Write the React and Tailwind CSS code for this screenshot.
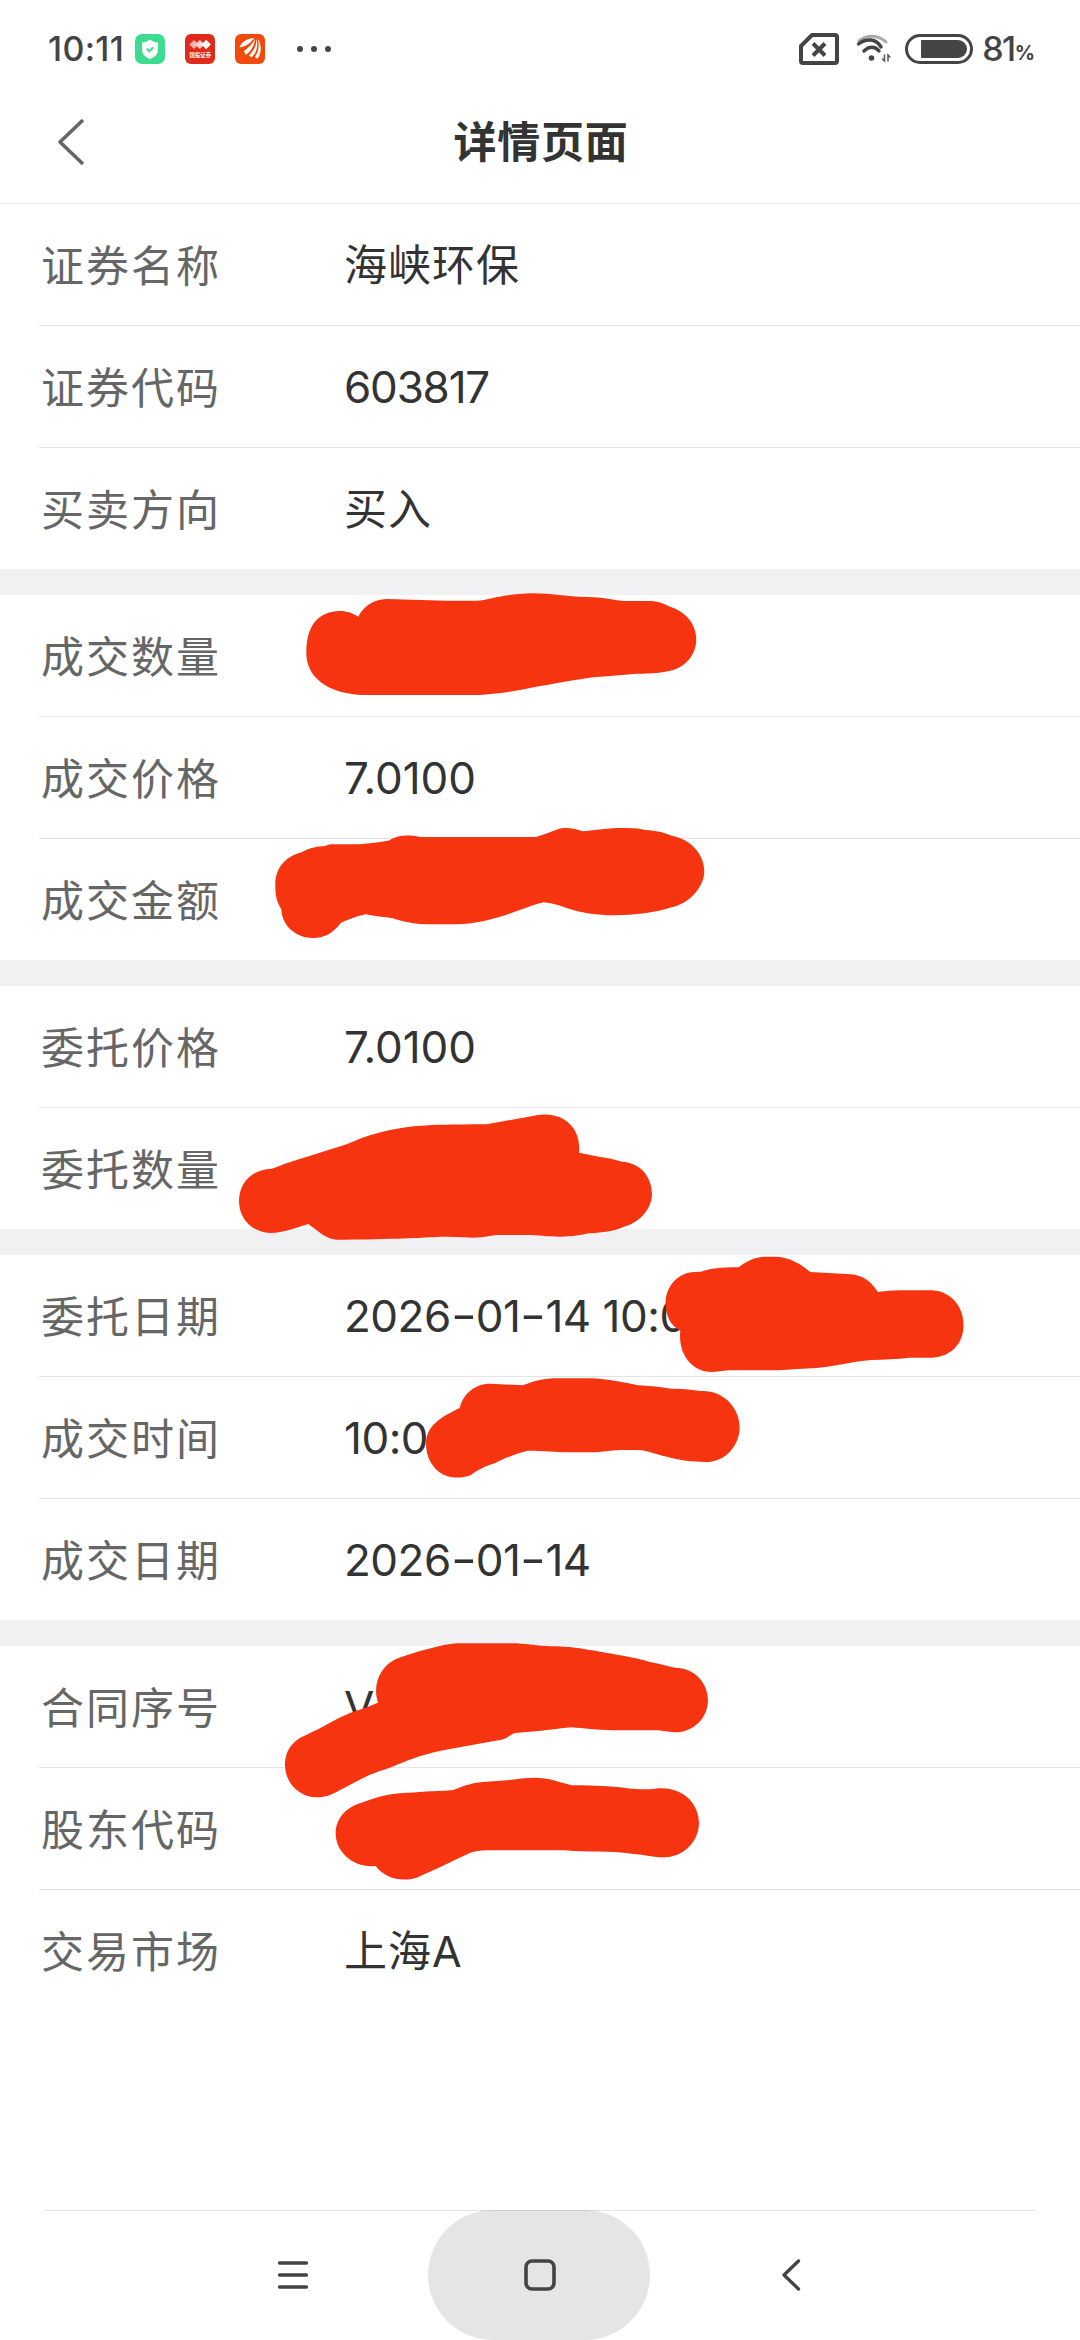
import React from 'react';

const groups = [
  [
    { label: '证券名称', value: '海峡环保' },
    { label: '证券代码', value: '603817', numeric: true, spacing: 'tracking-[-1.200px]' },
    { label: '买卖方向', value: '买入' },
  ],
  [
    { label: '成交数量', value: '' },
    { label: '成交价格', value: '7.0100', numeric: true, spacing: 'tracking-normal' },
    { label: '成交金额', value: '' },
  ],
  [
    { label: '委托价格', value: '7.0100', numeric: true, spacing: 'tracking-normal' },
    { label: '委托数量', value: '' },
  ],
  [
    { label: '委托日期', value: '2026-01-14 10:0', numeric: true },
    { label: '成交时间', value: '10:0', numeric: true },
    { label: '成交日期', value: '2026-01-14', numeric: true },
  ],
  [
    { label: '合同序号', value: 'V', numeric: true },
    { label: '股东代码', value: '' },
    { label: '交易市场', value: '上海A' },
  ],
];

// Marker strokes that hide the private values
const scribbles = [
  {
    transform: 'translate(260 570) scale(0.3333)',
    d: 'M295 140C310 110 340 88 380 87L560 92H650C690 90 720 72 820 70C870 70 920 80 980 81C1030 81 1060 90 1090 93H1160C1190 93 1205 98 1230 110C1280 125 1309 165 1309 208C1309 255 1275 295 1225 304C1200 309 1180 311 1120 312C1080 316 1040 318 1000 322C940 330 890 340 820 352C760 365 720 370 660 375H305C200 370 139 320 139 250C139 170 170 125 240 123C262 123 280 130 295 140Z',
  },
  {
    transform: 'translate(260 570) scale(0.3333)',
    d: 'M210 823H300C330 820 360 816 385 812C410 797 440 792 480 801H828C850 795 870 785 890 779C915 770 945 775 967 784C1000 782 1030 774 1090 774C1130 774 1140 776 1155 780C1190 782 1210 787 1235 797C1295 808 1333 855 1333 903C1333 950 1290 1000 1235 1012C1190 1028 1120 1036 1065 1036C1010 1036 960 1027 930 1017C895 1007 885 1000 850 997C800 1010 760 1030 720 1040C660 1058 620 1063 580 1063H500C450 1061 425 1054 398 1045C370 1041 345 1038 318 1033C290 1038 270 1048 243 1058C220 1088 195 1104 160 1104C105 1104 65 1065 64 1017C52 1000 46 980 46 950C44 895 75 860 125 847C150 832 175 829 195 828Z',
  },
  {
    transform: 'translate(220 1000) scale(0.3333)',
    d: 'M155 506C180 498 195 490 230 480L380 433C430 412 470 395 560 382C620 374 660 374 800 373L950 346C1030 332 1085 385 1077 458L1140 471C1170 475 1190 480 1205 485C1265 487 1296 535 1296 582C1296 625 1260 668 1210 681C1180 695 1150 697 1110 700C1080 705 1060 710 1020 710C980 710 955 705 920 705H830C800 710 780 713 760 713C720 712 700 710 660 710C600 713 560 716 370 719C330 722 310 705 300 698L265 672C225 683 195 699 150 699C95 697 57 655 57 603C57 550 95 508 155 506Z',
  },
  {
    transform: 'translate(320 1240) scale(0.4209 0.3333)',
    d: 'M905 95C930 85 950 82 995 82C1015 60 1040 50 1060 50H1085C1115 52 1140 70 1165 96L1260 103C1290 106 1310 125 1325 156C1345 154 1360 151 1380 151H1455C1500 155 1529 200 1529 255C1529 310 1500 350 1455 353H1400C1370 357 1340 359 1310 360C1260 365 1220 380 1180 384C1150 386 1120 388 1085 391H970C955 392 945 396 930 396C885 396 850 345 856 272C835 260 821 230 821 190C821 140 850 97 890 96Z',
  },
  {
    transform: 'translate(320 1240) scale(0.4209 0.3333)',
    d: 'M405 431L482 436C505 425 525 416 560 415H640C690 417 720 427 755 436C790 438 815 443 835 446C870 446 885 450 905 453C960 450 997 505 997 562C997 610 970 660 925 666C850 668 810 643 765 631C740 629 715 630 700 631C680 634 665 636 655 637H590C560 636 530 633 493 632C460 642 435 658 415 670C390 680 375 690 358 706C340 714 325 714 310 711C275 702 252 660 252 612C252 555 290 530 332 504C340 460 370 430 405 431Z',
  },
  {
    transform: 'translate(270 1620) scale(0.3333)',
    d: 'M380 116C440 95 510 75 560 70H740C780 73 810 78 840 79C900 79 930 85 1000 97C1060 107 1100 115 1140 126C1180 134 1200 140 1215 143C1275 143 1314 190 1314 240C1314 295 1270 337 1215 337C1190 336 1180 332 1165 331H1030C980 330 940 325 905 322C860 326 830 332 780 335L733 339C715 350 705 358 685 361L540 387C430 407 400 430 340 450C290 465 270 480 210 510C190 522 170 532 140 532C90 532 45 490 45 435C45 385 75 358 110 344C160 322 200 295 240 279C270 269 300 258 324 248C305 190 335 135 380 116Z',
  },
  {
    transform: 'translate(270 1620) scale(0.3333)',
    d: 'M270 550C310 535 350 521 400 519C430 519 450 515 480 514C510 512 530 513 550 510C590 495 600 490 640 486C680 482 720 482 760 475C830 467 860 485 905 496C980 496 1020 499 1060 503C1100 508 1130 510 1155 506C1235 495 1287 550 1287 608C1287 665 1240 712 1180 712C1150 711 1130 705 1085 701C1020 692 950 698 885 691H650C625 692 610 695 597 700C560 718 500 747 440 773C395 787 345 775 317 738C255 745 197 700 197 640C197 595 230 562 270 550Z',
  },
];

const ShieldApp = () => (
  <svg width="30" height="30" viewBox="0 0 30 30">
    <rect width="30" height="30" rx="7" fill="#3ddc91" />
    <path d="M15 5.500c2.500 2 5 2.800 8 3v7c0 5-3.500 7.500-8 9.500-4.500-2-8-4.500-8-9.500v-7c3-.2 5.500-1 8-3z" fill="#fff" />
    <path d="M11.800 14.800l2.500 2.500 4-4" fill="none" stroke="#3ddc91" strokeWidth="2" />
  </svg>
);

const BrokerApp = () => (
  <svg width="30" height="30" viewBox="0 0 30 30">
    <rect width="30" height="30" rx="6" fill="#e02a1c" />
    <path d="M4.500 10.500l4.500-4.500 4.500 4.500-4.500 4.500z" fill="#f6b3ad" />
    <path d="M10 10.500l4.800-4.500 4.800 4.500-4.800 4.500z" fill="#fad2ce" />
    <path d="M16.500 10.500l4.700-4.700 4.700 4.700-4.700 4.700z" fill="#fff" />
    <text x="4.500" y="23.300" fontSize="5.400" fontWeight="700" fill="#fff" fontFamily="Noto Sans CJK SC, sans-serif">国投证券</text>
  </svg>
);

const LeafApp = () => (
  <svg width="30" height="30" viewBox="0 0 30 30">
    <rect width="30" height="30" rx="6" fill="#f24a0a" />
    <path d="M19 4C12 4.500 6 8 4.500 13.500 10 12.500 15 10 19 4z" fill="#fff" />
    <path d="M20 4.500C17.500 10 14 13.500 9 17l1.500 4C15.500 18 19.500 12 20 4.500z" fill="#fff" />
    <path d="M21.500 4.500C21.500 12 19 17 14 21.500l2.500 2C21.500 19 23.500 12 21.500 4.500z" fill="#fff" />
    <path d="M23 5C24.500 12 23.500 18 20 23l2.500 2C26.500 19.500 27 11 23 5z" fill="#fff" />
  </svg>
);

const StatusBar = () => (
  <div className="flex h-20 items-center justify-between pt-[18px] pr-[45px] pl-[48px] text-[#444]">
    <div className="flex items-center">
      <span className="w-[87px] text-[34px] leading-none font-medium tracking-[0.300px]">10:11</span>
      <div className="flex items-center gap-5">
        <ShieldApp />
        <BrokerApp />
        <LeafApp />
      </div>
      <div className="ml-8 flex gap-2">
        <i className="size-1.5 rounded-full bg-[#444]" />
        <i className="size-1.5 rounded-full bg-[#444]" />
        <i className="size-1.5 rounded-full bg-[#444]" />
      </div>
    </div>

    <div className="flex items-center">
      <svg width="40" height="32" viewBox="0 0 40 32" fill="none" stroke="#444" strokeWidth="4" className="mr-[17px]">
        <path d="M13 2h23q2 0 2 2v24q0 2-2 2H4q-2 0-2-2V13z" strokeLinejoin="round" />
        <path d="M14 10.500l12 12M26 10.500l-12 12" />
      </svg>
      <svg width="36" height="30" viewBox="0 0 36 30" fill="none" strokeLinecap="round" className="mr-[13px]">
        <path d="M3 7C11 .5 22 .5 30 8" stroke="#aaa" strokeWidth="3" />
        <path d="M2.500 10c8-6.500 18-5 22.500 3" stroke="#444" strokeWidth="3.500" />
        <path d="M8 17c5-5 11-5 15 0" stroke="#444" strokeWidth="3.500" />
        <circle cx="15.500" cy="24" r="2.800" fill="#444" />
        <path d="M28.500 21v6l-2-2M32 27v-6l2 2" stroke="#555" strokeWidth="1.500" />
      </svg>
      <svg width="68" height="30" viewBox="0 0 68 30" className="mr-[9px]">
        <rect x="1.500" y="1.500" width="65" height="27" rx="13.500" fill="none" stroke="#444" strokeWidth="3" />
        <path d="M17 6h36a9 9 0 0 1 0 18H17q-1 0-1-1V7q0-1 1-1z" fill="#444" />
      </svg>
      <span className="text-[34px] leading-none font-medium tracking-[-1.500px]">81</span>
      <span className="mt-2 text-[20px] leading-none font-bold">%</span>
    </div>
  </div>
);

const Header = () => (
  <header className="flex h-[124px] items-center border-b border-[#e3e3e3] px-[56px]">
    <button className="flex-1" aria-label="返回">
      <svg width="30" height="50" viewBox="0 0 30 50" fill="none" stroke="#666" strokeWidth="3.600">
        <path d="M27 3L4 25l23 22" strokeLinejoin="round" />
      </svg>
    </button>
    <h1 className="pt-0.5 pl-0.5 text-[43px] leading-none font-bold tracking-[0.800px]">详情页面</h1>
    <div className="flex-1" />
  </header>
);

// Dates use a wide dash between the digits
const NumericValue = ({ value }) =>
  value.split('-').map((part, i) => (
    <React.Fragment key={i}>
      {i > 0 && <span className="inline-block w-[25px] -translate-y-px scale-x-130 text-center">-</span>}
      {part}
    </React.Fragment>
  ));

const Row = ({ label, value, numeric, spacing = 'tracking-[-0.500px]', last }) => (
  <div className={`ml-[39px] flex items-center ${last ? 'h-[121px]' : 'h-[122px] border-b border-[#e3e3e3]'}`}>
    <span className="w-[305px] pt-[3px] pl-0.5 text-[43px] leading-none tracking-[2px] text-[#666]">{label}</span>
    {numeric ? (
      <span className={`text-[44px] leading-none whitespace-nowrap ${spacing}`}>
        <NumericValue value={value} />
      </span>
    ) : (
      <span className="pt-0.5 text-[43px] leading-none tracking-[1px] whitespace-nowrap">{value}</span>
    )}
  </div>
);

const NavBar = () => (
  <nav className="relative mt-[199px] flex h-[130px] items-center pl-[277px]">
    <div className="absolute inset-x-[44px] top-0 h-px bg-[#e3e3e3]" />
    <svg width="32" height="30" viewBox="0 0 32 30" stroke="#444" strokeWidth="3.300" strokeLinecap="round">
      <path d="M2.500 3h27M2.500 15h27M2.500 27h27" />
    </svg>
    <div className="relative ml-[119px] flex h-[130px] w-[222px] items-center justify-center rounded-[65px] bg-black/10">
      <svg width="34" height="34" viewBox="0 0 34 34" fill="none" stroke="#444" strokeWidth="3.600" className="ml-0.5">
        <rect x="3" y="3" width="28" height="28" rx="6" />
      </svg>
    </div>
    <svg width="20" height="34" viewBox="0 0 20 34" fill="none" stroke="#444" strokeWidth="3.300" strokeLinecap="round" strokeLinejoin="round" className="ml-[131px]">
      <path d="M17.500 3L3 17l14.500 14" />
    </svg>
  </nav>
);

const App = () => (
  <div className="relative h-[2340px] w-[1080px] overflow-hidden bg-white font-[Inter,'Noto_Sans_CJK_SC',sans-serif] text-[#333]">
    <StatusBar />
    <Header />
    <main className="flex flex-col gap-[26px] bg-[#f1f1f4]">
      {groups.map((rows) => (
        <section key={rows[0].label} className="bg-white">
          {rows.map((row, i) => (
            <Row key={row.label} {...row} last={i === rows.length - 1} />
          ))}
        </section>
      ))}
    </main>
    <NavBar />

    <svg className="pointer-events-none absolute inset-0" width="1080" height="2340" viewBox="0 0 1080 2340" fill="#f63410">
      {scribbles.map((s) => (
        <path key={s.d} d={s.d} transform={s.transform} />
      ))}
    </svg>
  </div>
);

export default App;
